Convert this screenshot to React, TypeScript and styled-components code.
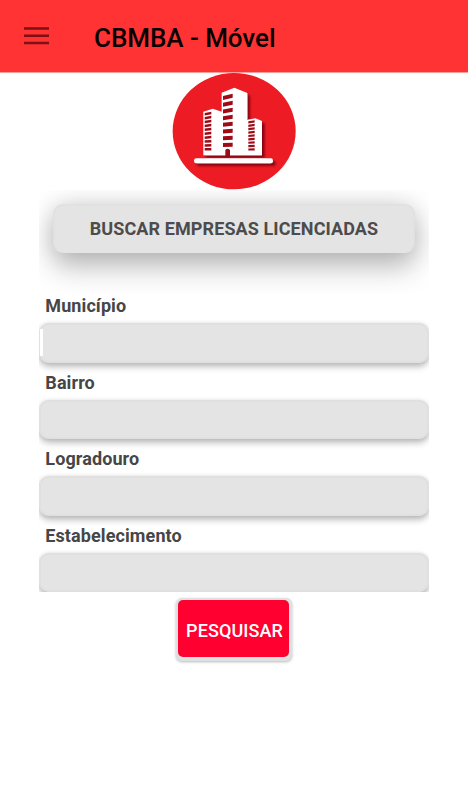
import React from "react";
import styled, { createGlobalStyle } from "styled-components";

const GlobalStyle = createGlobalStyle`
  * { box-sizing: border-box; }
  body {
    margin: 0;
    background: #fff;
    font-family: Roboto, sans-serif;
  }
`;

const Screen = styled.div`
  width: 468px;
  height: 800px;
  overflow: hidden;
  display: flex;
  flex-direction: column;
  align-items: center;
  background: #fff;
`;

const Header = styled.header`
  width: 100%;
  height: 73px;
  flex: none;
  display: flex;
  align-items: center;
  padding: 3px 0 0 24px;
  background: #ff3333;
  border-bottom: 1px solid #ff9c9c;
`;

const MenuButton = styled.button`
  width: 25px;
  height: 20px;
  margin: 0 45px 4px 0;
  padding: 0;
  border: 0;
  background: none;
  display: flex;
  svg { display: block; }
`;

const Title = styled.h1`
  margin: 0;
  padding-top: 1px;
  color: #080000;
  font-size: 26px;
  line-height: 32px;
  font-weight: 500;
  letter-spacing: -0.05px;
  white-space: nowrap;
`;

const Logo = styled.svg`
  display: block;
  flex: none;
  width: 140px;
  height: 117px;
`;

const Content = styled.main`
  width: 390px;
  height: 402px;
  flex: none;
  overflow: hidden;
`;

const Banner = styled.div`
  height: 104px;
  padding: 14px 14px 0;
  overflow: hidden;
`;

const BannerButton = styled.button`
  display: block;
  width: 362px;
  height: 49px;
  padding: 0;
  border: 2px solid #e1e1e1;
  border-bottom-color: #e4e4e4;
  border-radius: 10px;
  background: #e4e4e4;
  box-shadow: 0 16px 28px rgba(0, 0, 0, 0.22), 0 0 24px rgba(0, 0, 0, 0.17);
  color: #4c4c4c;
  font: 700 18px/45px Roboto, sans-serif;
  letter-spacing: 0.1px;
  white-space: nowrap;
`;

const Field = styled.label`
  display: flex;
  flex-direction: column;
  height: 76.6px;
`;

const FieldLabel = styled.span`
  height: 29px;
  padding: 0 0 0 6.3px;
  color: #464646;
  font-size: 18px;
  line-height: 23px;
  font-weight: 700;
  letter-spacing: 0.1px;
`;

const FieldBox = styled.span`
  display: flex;
  align-items: center;
  height: 39.5px;
  padding-left: 1px;
  border-radius: 10px;
  background: #e4e4e4;
  box-shadow: inset 0 0 0 2px #e0e0e0, 0 4px 6px rgba(0, 0, 0, 0.25),
    0 0 4px rgba(0, 0, 0, 0.1);
`;

const Caret = styled.i`
  width: 3px;
  height: 27px;
  background: #fff;
`;

const SearchButton = styled.button`
  flex: none;
  width: 116px;
  height: 63px;
  margin-top: 6px;
  padding: 0;
  border: solid #dfe0e0;
  border-width: 2px 3px 4px 2px;
  border-radius: 6px;
  background: #dfe0e0;
  box-shadow: 0 1px 3px rgba(0, 0, 0, 0.28);
`;

const SearchFace = styled.span`
  display: block;
  height: 57px;
  border-radius: 5px;
  background: #ff0030;
  color: #fff;
  font: 500 18px/61px Roboto, sans-serif;
  letter-spacing: 0.1px;
  text-align: center;
  padding-left: 2px;
  white-space: nowrap;
`;

const fields = ["Município", "Bairro", "Logradouro", "Estabelecimento"];

function windows(x: number, y: number, w: number, h: number, rise: number, step: number, count: number) {
  return Array.from({ length: count }, (_, i) => {
    const top = y + i * step;
    const r = rise * (1 - i / count);
    return (
      <path
        key={i}
        d={`M${x} ${top + r} L${x + w} ${top} V${top + h} L${x} ${top + h + r} Z`}
      />
    );
  });
}

function BuildingsLogo() {
  return (
    <Logo viewBox="0 21 420 351">
      <defs>
        <filter id="shade" x="-10%" y="-10%" width="125%" height="125%">
          <feDropShadow dx="8" dy="8" stdDeviation="3" floodColor="#7b0008" floodOpacity="0.9" />
        </filter>
      </defs>
      <ellipse cx="210.5" cy="195.5" rx="184.5" ry="174.5" fill="#ed1c24" />
      <g fill="#fff" filter="url(#shade)">
        <path d="M118 137 L146 128 L173 137 V80 L211 65 L250 81 V162 L274 157 L294 165 V268 H118 Z" />
        <rect x="90" y="277" width="237" height="15" rx="7" />
      </g>
      <g fill="#9e0b16">
        {windows(177, 83, 29, 12, 7, 21, 8)}
        {windows(122, 137, 20, 7.5, 4, 12.1, 10)}
        {windows(253, 163, 19, 6.5, 3, 10.5, 9)}
        <path d="M184 270 V252 Q191 245 198 252 V270 Z" />
      </g>
    </Logo>
  );
}

export default function App() {
  return (
    <>
      <GlobalStyle />
      <Screen>
        <Header>
          <MenuButton aria-label="Menu">
            <svg width="25" height="20" viewBox="0 0 25 20">
              <path d="M0 2.5h25M0 9.8h25M0 17h25" stroke="#7d1015" strokeWidth="2.4" />
            </svg>
          </MenuButton>
          <Title>CBMBA - Móvel</Title>
        </Header>
        <BuildingsLogo />
        <Content>
          <Banner>
            <BannerButton>BUSCAR EMPRESAS LICENCIADAS</BannerButton>
          </Banner>
          {fields.map((name, i) => (
            <Field key={name}>
              <FieldLabel>{name}</FieldLabel>
              <FieldBox>{i === 0 && <Caret />}</FieldBox>
            </Field>
          ))}
        </Content>
        <SearchButton>
          <SearchFace>PESQUISAR</SearchFace>
        </SearchButton>
      </Screen>
    </>
  );
}
